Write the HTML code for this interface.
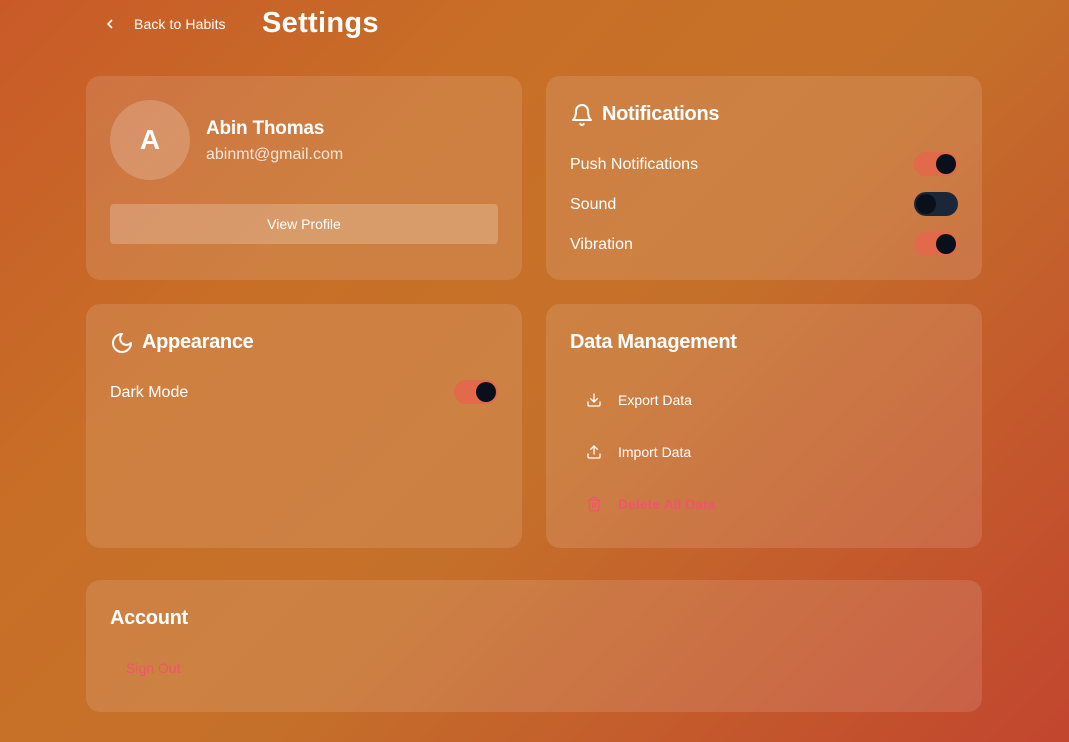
<!DOCTYPE html>
<html><head><style>
*{box-sizing:border-box;margin:0;padding:0}
body{width:1069px;height:742px;overflow:hidden;font-family:"Liberation Sans",sans-serif;color:#fff;
background:linear-gradient(135deg,#c95a28 0%,#c86f27 30%,#c5702a 55%,#c2452e 100%);position:relative}
.card{position:absolute;background:rgba(255,255,255,0.12);border-radius:14px}
.t{position:absolute;white-space:nowrap}
.tog{position:absolute;width:44px;height:24px;border-radius:12px;background:#e2694a}
.tog i{position:absolute;top:2px;right:2px;width:20px;height:20px;border-radius:50%;background:#0a0f1c}
.tog.off{background:#1b2638}.tog.off i{left:2px;right:auto}
.h{font-size:20px;font-weight:bold;letter-spacing:-0.3px}
</style></head><body>
<svg class="t" style="left:104px;top:17px" width="12" height="14" viewBox="0 0 12 14"><path d="M8 3L4 7l4 4" fill="none" stroke="#fff" stroke-width="1.6"/></svg>
<div class="t" style="left:134px;top:16px;font-size:14px;letter-spacing:0.1px">Back to Habits</div>
<div class="t" style="left:262px;top:7px;font-size:29px;font-weight:bold;letter-spacing:0.3px">Settings</div>

<div class="card" style="left:86px;top:76px;width:436px;height:204px"></div>
<div class="t" style="left:110px;top:100px;width:80px;height:80px;border-radius:50%;background:rgba(255,255,255,0.2);font-size:28px;font-weight:bold;text-align:center;line-height:80px">A</div>
<div class="t" style="left:206px;top:118px;font-size:19px;font-weight:bold;letter-spacing:-0.2px">Abin Thomas</div>
<div class="t" style="left:206px;top:146px;font-size:16px;color:rgba(255,255,255,0.8)">abinmt@gmail.com</div>
<div class="t" style="left:110px;top:204px;width:388px;height:40px;border-radius:4px;background:rgba(255,255,255,0.22);font-size:14px;text-align:center;line-height:40px">View Profile</div>

<div class="card" style="left:546px;top:76px;width:436px;height:204px"></div>
<svg class="t" style="left:570px;top:103px" width="24" height="24" viewBox="0 0 24 24" fill="none" stroke="#fff" stroke-width="2" stroke-linecap="round" stroke-linejoin="round"><path d="M6 8a6 6 0 0 1 12 0c0 7 3 9 3 9H3s3-2 3-9"/><path d="M10.3 21a1.94 1.94 0 0 0 3.4 0"/></svg>
<div class="t h" style="left:602px;top:103px">Notifications</div>
<div class="t" style="left:570px;top:156px;font-size:16px">Push Notifications</div>
<div class="t" style="left:570px;top:196px;font-size:16px">Sound</div>
<div class="t" style="left:570px;top:236px;font-size:16px">Vibration</div>
<div class="tog" style="left:914px;top:152px"><i></i></div>
<div class="tog off" style="left:914px;top:192px"><i></i></div>
<div class="tog" style="left:914px;top:232px"><i></i></div>

<div class="card" style="left:86px;top:304px;width:436px;height:244px"></div>
<svg class="t" style="left:110px;top:331px" width="24" height="24" viewBox="0 0 24 24" fill="none" stroke="#fff" stroke-width="2" stroke-linecap="round" stroke-linejoin="round"><path d="M12 3a6 6 0 0 0 9 9 9 9 0 1 1-9-9Z"/></svg>
<div class="t h" style="left:142px;top:331px">Appearance</div>
<div class="t" style="left:110px;top:384px;font-size:16px">Dark Mode</div>
<div class="tog" style="left:454px;top:380px"><i></i></div>

<div class="card" style="left:546px;top:304px;width:436px;height:244px"></div>
<div class="t h" style="left:570px;top:331px">Data Management</div>
<svg class="t" style="left:586px;top:392px" width="16" height="16" viewBox="0 0 24 24" fill="none" stroke="#fff" stroke-width="2" stroke-linecap="round" stroke-linejoin="round"><path d="M21 15v4a2 2 0 0 1-2 2H5a2 2 0 0 1-2-2v-4"/><path d="M7 10l5 5 5-5"/><path d="M12 15V3"/></svg>
<div class="t" style="left:618px;top:392px;font-size:14px">Export Data</div>
<svg class="t" style="left:586px;top:444px" width="16" height="16" viewBox="0 0 24 24" fill="none" stroke="#fff" stroke-width="2" stroke-linecap="round" stroke-linejoin="round"><path d="M21 15v4a2 2 0 0 1-2 2H5a2 2 0 0 1-2-2v-4"/><path d="M17 8l-5-5-5 5"/><path d="M12 3v12"/></svg>
<div class="t" style="left:618px;top:444px;font-size:14px">Import Data</div>
<svg class="t" style="left:586px;top:496px" width="16" height="16" viewBox="0 0 24 24" fill="none" stroke="#f0556a" stroke-width="2" stroke-linecap="round"><path d="M3 6h18M19 6v14a2 2 0 0 1-2 2H7a2 2 0 0 1-2-2V6M8 6V4a2 2 0 0 1 2-2h4a2 2 0 0 1 2 2v2M10 11v6M14 11v6"/></svg>
<div class="t" style="left:618px;top:496px;font-size:14px;color:#f0556a;font-weight:bold">Delete All Data</div>

<div class="card" style="left:86px;top:580px;width:896px;height:132px"></div>
<div class="t h" style="left:110px;top:607px">Account</div>
<div class="t" style="left:126px;top:660px;font-size:14px;color:#f0556a">Sign Out</div>
</body></html>
